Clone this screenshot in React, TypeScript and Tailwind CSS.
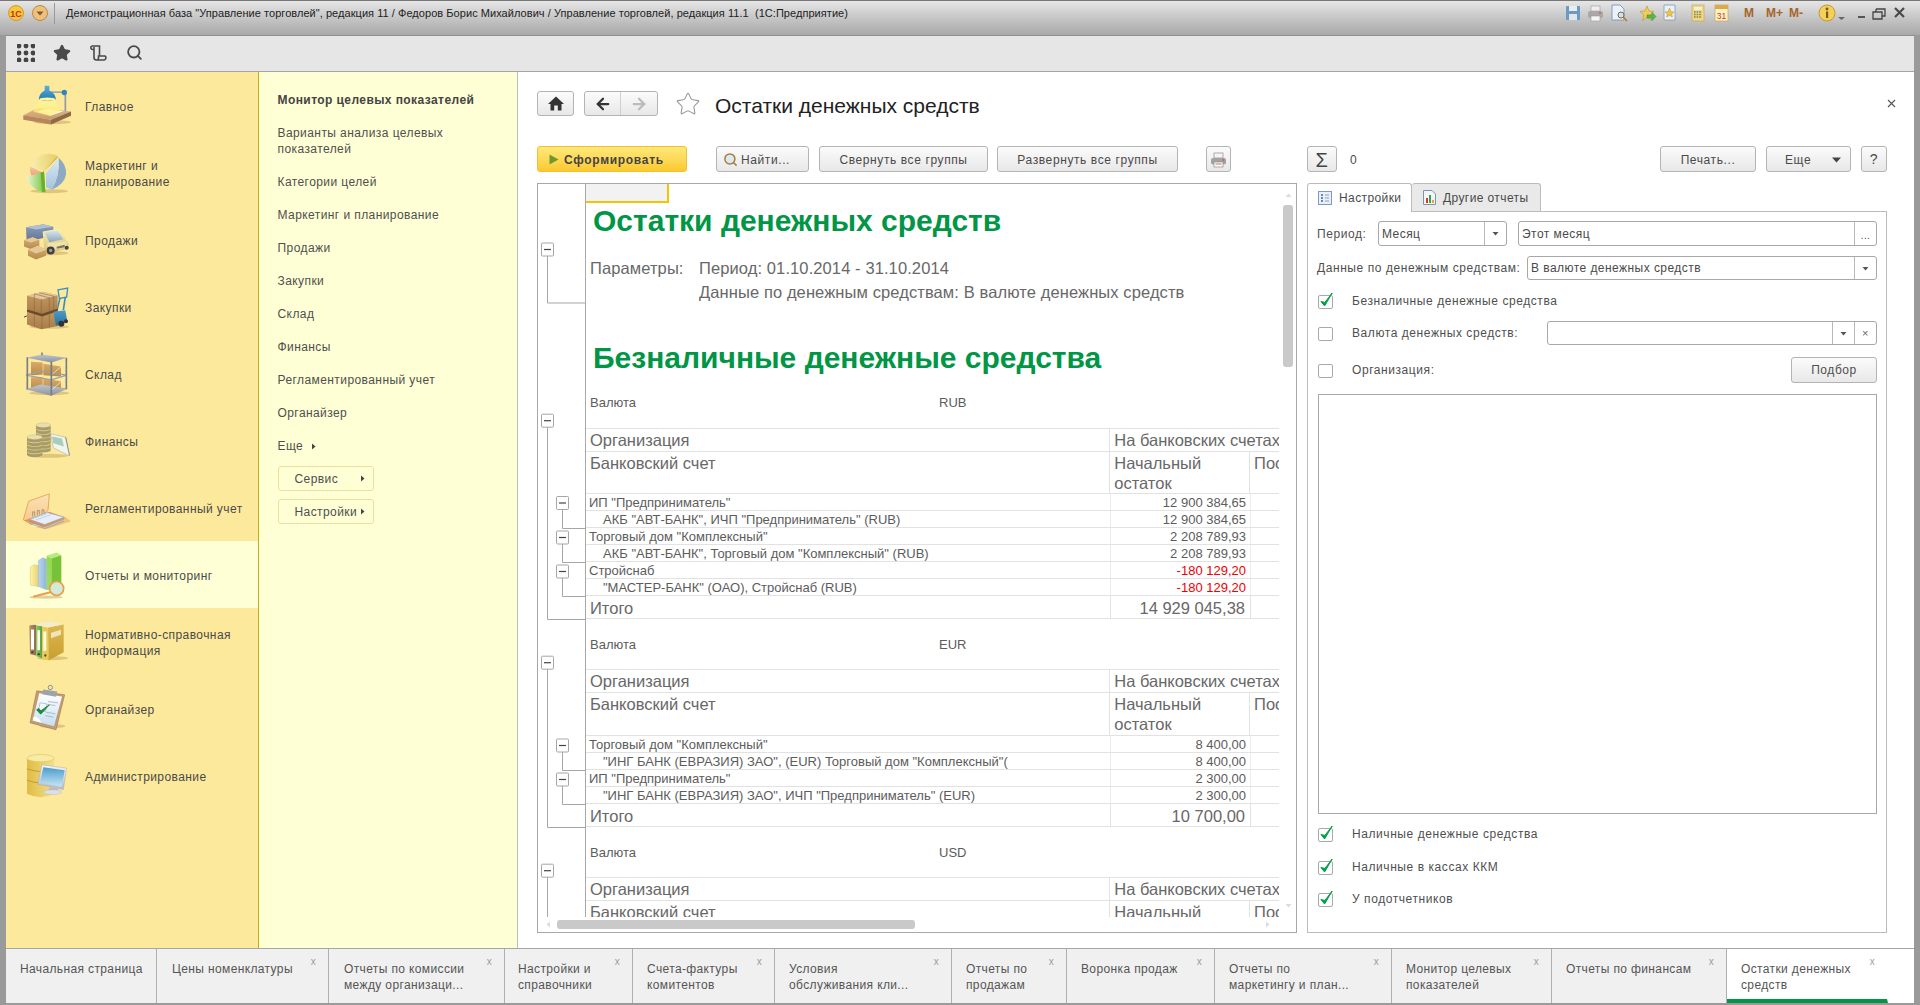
import React from "react";
import { Star, Search, ArrowLeft, ArrowRight } from "lucide-react";

const Btn = ({ w, children, cls = "" }: { w: string; children?: React.ReactNode; cls?: string }) => (
  <div className={`${w} h-[26px] shrink-0 flex items-center justify-center pt-[1px] rounded-[3px] border border-[#b4b4b4] bg-linear-to-b from-[#fbfbfb] to-[#e8e8e8] text-[12px] tracking-[0.6px] text-[#4a4a4a] ${cls}`}>
    {children}
  </div>
);

const Check = ({ on }: { on?: boolean }) => (
  <svg width="18" height="18" viewBox="0 0 18 18" className="shrink-0 overflow-visible">
    <rect x="0.5" y="3.5" width="14" height="13" rx="1.5" fill="#fff" stroke="#a9a9a9" />
    {on && <path d="M3 9.5 L6.6 14 L14.2 1 L6.9 10.4 Z" fill="#00a048" stroke="#00a048" strokeWidth="1" strokeLinejoin="round" />}
  </svg>
);

const Tri = ({ dir = "down", c = "#555" }: { dir?: "down" | "right" | "up" | "left"; c?: string }) => (
  <svg width="7" height="7" viewBox="0 0 7 7" className="shrink-0">
    {dir === "down" && <path d="M0.5 2 H6.5 L3.5 5.5 Z" fill={c} />}
    {dir === "up" && <path d="M0.5 5 H6.5 L3.5 1.5 Z" fill={c} />}
    {dir === "right" && <path d="M2 0.5 V6.5 L5.5 3.5 Z" fill={c} />}
    {dir === "left" && <path d="M5 0.5 V6.5 L1.5 3.5 Z" fill={c} />}
  </svg>
);

/* ---------- section icons: drawn in a 192-unit wide space ---------- */
const V = ({ c, children }: { c: number; children: React.ReactNode }) => (
  <svg width="64" height="62" viewBox={`0 ${c - 93} 192 186`}>{children}</svg>
);
const Shadow = ({ cx, cy, rx, ry = 6 }: { cx: number; cy: number; rx: number; ry?: number }) => (
  <ellipse cx={cx} cy={cy} rx={rx} ry={ry} fill="#b79a58" opacity=".45" />
);
const G = ({ id, a, b, h }: { id: string; a: string; b: string; h?: boolean }) => (
  <linearGradient id={id} x1="0" y1="0" x2={h ? "1" : "0"} y2={h ? "0" : "1"}>
    <stop offset="0" stopColor={a} /><stop offset="1" stopColor={b} />
  </linearGradient>
);

const IconHome = () => (
  <V c={82.5}>
    <defs>
      <G id="a1" a="#fff7a0" b="#ffec6a" />
      <G id="a2" a="#5eaedb" b="#1f78ad" />
      <G id="a3" a="#e2b88e" b="#c89868" />
    </defs>
    <Shadow cx={110} cy={131} rx={55} />
    <path d="M22 110 L66 88 L165 99 L105 124 Z" fill="url(#a3)" />
    <path d="M22 110 L105 124 L105 138 L22 124 Z" fill="#b5865c" />
    <path d="M105 124 L165 99 L165 112 L105 138 Z" fill="#8f6a48" />
    <path d="M62 100 L92 90 L142 98 L104 112 Z" fill="#fffdf0" />
    <path d="M70 62 H116 L132 98 L100 112 L52 100 Z" fill="url(#a1)" opacity=".75" />
    <path d="M148 46 V98" stroke="#8e9aa4" strokeWidth="5" />
    <path d="M102 41 H146" stroke="#9aa6b0" strokeWidth="5" />
    <circle cx="145" cy="42" r="8" fill="#2f86b8" />
    <path d="M86 22 H100 V36 Q118 44 120 62 Q94 72 68 62 Q70 44 86 36 Z" fill="url(#a2)" />
    <ellipse cx="94" cy="62" rx="24" ry="5" fill="#fff59a" />
  </V>
);
const IconPie = () => (
  <V c={283.5}>
    <defs>
      <G id="b1" a="#f8eeb0" b="#e6cc62" h />
      <G id="b2" a="#dbe9f5" b="#a4c3df" />
      <G id="b3" a="#eef8d8" b="#74c23c" h />
      <G id="b4" a="#f7c4a0" b="#f0a280" />
    </defs>
    <Shadow cx={100} cy={338} rx={56} />
    <path d="M85 278 L45 262 A 58 58 0 0 1 128 234 Z" fill="url(#b1)" />
    <path d="M128 234 L85 278 L118 240 Z" fill="#cbae48" />
    <path d="M85 284 L43 265 Q 39 278 46 291 Z" fill="url(#b4)" />
    <path d="M128 238 Q152 258 150 288 Q146 318 106 334 Q132 296 128 238 Z" fill="#8ca9c6" />
    <path d="M90 284 L126 240 Q134 292 106 333 L90 326 Z" fill="url(#b2)" />
    <path d="M30 296 L84 279 L88 341 Q50 338 30 296 Z" fill="url(#b3)" />
    <path d="M74 283 L84 279 L88 341 L78 340 Z" fill="#66b034" />
  </V>
);
const IconTruck = () => (
  <V c={484.5}>
    <defs>
      <G id="c1" a="#8da0bc" b="#5f7290" />
      <G id="c2" a="#f8efb4" b="#d6c078" />
      <G id="c3" a="#d6e6f0" b="#8ea6b8" />
      <G id="c4" a="#d9b070" b="#b58a4e" />
    </defs>
    <Shadow cx={105} cy={524} rx={52} />
    <path d="M30 446 L82 437 L112 445 L112 472 L32 490 Z" fill="url(#c1)" />
    <path d="M30 446 L82 437 L112 445 L60 453 Z" fill="#b0bfd2" />
    <path d="M80 459 L128 451 L158 494 L158 510 L96 524 L84 510 Z" fill="url(#c2)" />
    <path d="M86 462 L124 456 L142 482 L100 491 Z" fill="url(#c3)" />
    <path d="M92 494 L150 490 L156 506 L100 516 Z" fill="#efe3a8" />
    <path d="M122 505 L146 499 L146 506 L122 511 Z" fill="#7a7460" />
    <circle cx="104" cy="516" r="12" fill="#3f3f3f" /><circle cx="104" cy="516" r="5" fill="#9c9c9c" />
    <circle cx="152" cy="508" r="6" fill="#444" />
    <path d="M24 485 L50 476 L70 484 L70 502 L45 512 L24 504 Z" fill="url(#c4)" />
    <path d="M24 485 L50 476 L70 484 L45 492 Z" fill="#e6c898" />
    <path d="M36 514 L66 502 L92 514 L90 532 L60 543 L36 532 Z" fill="url(#c4)" />
    <path d="M36 514 L66 502 L92 514 L60 525 Z" fill="#e6c898" />
  </V>
);
const IconBoxes = () => (
  <V c={685.5}>
    <defs>
      <G id="d1" a="#c69a64" b="#a87c48" />
      <G id="d2" a="#4f9dca" b="#256f9f" />
    </defs>
    <Shadow cx={100} cy={745} rx={60} />
    <path d="M126 634 L155 629 L152 656 L130 660 Z" fill="none" stroke="#3d8ebd" strokeWidth="4" />
    <path d="M132 658 L122 700 M148 655 L142 695" stroke="#3d8ebd" strokeWidth="5" />
    <path d="M33 696 L122 690 L128 742 L76 752 L33 738 Z" fill="url(#d1)" />
    <path d="M33 652 L80 640 L125 650 L125 690 L78 706 L33 692 Z" fill="url(#d1)" />
    <path d="M33 652 L80 640 L125 650 L78 663 Z" fill="#e2c79a" />
    <path d="M55 646 L100 658 L100 698 M70 643 L113 653 L113 694 M55 646 V699 M76 704 V662" stroke="#86623a" strokeWidth="1.6" fill="none" />
    <path d="M55 702 V744 M78 708 V752 M100 704 V748" stroke="#86623a" strokeWidth="1.6" />
    <path d="M33 692 L78 706 L125 690 L125 698 L78 714 L33 700 Z" fill="#6b4a28" />
    <path d="M112 700 L148 695 L154 730 L120 742 Z" fill="url(#d2)" />
    <path d="M24 716 L33 712" stroke="#444" strokeWidth="3" />
    <circle cx="136" cy="736" r="9" fill="#333" /><circle cx="150" cy="728" r="6" fill="#333" />
  </V>
);
const IconShelf = () => (
  <V c={100.5}>
    <defs><G id="e1" a="#d9aa66" b="#b98a48" /><G id="e2" a="#c0c5cc" b="#8b929b" /></defs>
    <Shadow cx={100} cy={158} rx={60} />
    <path d="M45 64 L80 66 V102 L45 104 Z" fill="url(#e1)" /><path d="M82 70 L135 78 V108 L82 104 Z" fill="url(#e1)" />
    <path d="M45 110 L80 110 V146 L45 148 Z" fill="url(#e1)" /><path d="M82 114 L135 122 V152 L82 148 Z" fill="url(#e1)" />
    <path d="M32 52 L78 42 L152 52 L106 66 Z" fill="url(#e2)" />
    <path d="M30 104 L76 92 L152 104 L106 118 Z" fill="none" stroke="#9aa1aa" strokeWidth="4" />
    <path d="M28 146 L74 132 L156 144 L106 166 Z" fill="url(#e2)" />
    <path d="M34 50 V146 M106 64 V164 M151 52 V146" stroke="#767e88" strokeWidth="5" />
    <path d="M78 44 V36" stroke="#7d858f" strokeWidth="5" />
    <path d="M110 100 L148 68 M110 146 L148 112" stroke="#f4f4f4" strokeWidth="2" />
  </V>
);
const Coin = ({ x, ys, rx }: { x: number; ys: number[]; rx: number }) => (
  <>
    {ys.map((y) => (
      <g key={y}>
        <path d={`M${x - rx} ${y} V${y + 9} A ${rx} 7 0 0 0 ${x + rx} ${y + 9} V${y} Z`} fill="#a89c64" />
        <ellipse cx={x} cy={y} rx={rx} ry="7" fill="#e9dfb0" stroke="#b5a970" strokeWidth="1" />
      </g>
    ))}
  </>
);
const IconCoins = () => (
  <V c={301.5}>
    <Shadow cx={100} cy={346} rx={56} />
    <path d="M104 280 L148 290 L160 346 L112 322 Z" fill="#f0f5f0" stroke="#9aa8a0" strokeWidth="1.5" />
    <path d="M108 288 L138 294 L144 318 L112 308 Z" fill="#a9cdbb" />
    <path d="M148 290 L150 288 L162 344 L160 346 Z" fill="#7c8a84" />
    <Coin x={82} rx={22} ys={[320, 309, 298, 287, 276, 265, 254]} />
    <Coin x={56} rx={23} ys={[334, 323, 312, 301, 290]} />
  </V>
);
const IconFolderChart = () => (
  <V c={502.5}>
    <defs><G id="g1" a="#fbe2b4" b="#f6c88a" /></defs>
    <path d="M60 560 L150 532 L165 542 L90 566 Z" fill="#e8b878" opacity=".8" />
    <path d="M22 538 L38 482 L100 460 L96 510 L46 552 Z" fill="url(#g1)" stroke="#dc8c3c" strokeWidth="2" />
    <path d="M50 528 V514 H56 V526 M64 524 V510 H70 V522 M78 520 V508 H84 V518" fill="none" stroke="#8a7a64" strokeWidth="2" />
    <path d="M24 540 L100 514 L150 532 L84 560 Z" fill="#e8924a" />
    <path d="M40 536 L94 516 L144 530 L86 552 Z" fill="#e6eff9" stroke="#7b9dc9" strokeWidth="1.4" />
    <path d="M40 542 L86 558 L144 536 M40 548 L86 564 L144 542" fill="none" stroke="#7b9dc9" strokeWidth="2" />
    <path d="M46 536 L92 520 M60 538 L106 522" stroke="#9cb8da" strokeWidth="1.5" />
  </V>
);
const IconBars = () => (
  <V c={703.5}>
    <defs>
      <G id="h1" a="#8fdc48" b="#a8d66c" />
      <G id="h2" a="#b8d6ee" b="#8db6d8" h />
      <G id="h3" a="#fff2a0" b="#e6d27a" h />
    </defs>
    <Shadow cx={90} cy={770} rx={50} ry={5} />
    <path d="M43 680 L55 672 L68 676 V738 L43 734 Z" fill="url(#h3)" stroke="#c9b25c" strokeWidth="1" />
    <path d="M67 660 L80 652 L92 656 V748 L67 738 Z" fill="url(#h2)" stroke="#7fa5c8" strokeWidth="1" />
    <path d="M92 646 L122 636 L136 644 L106 654 Z" fill="#b7ea82" />
    <path d="M92 646 L106 654 V750 L92 748 Z" fill="url(#h1)" />
    <path d="M106 654 L136 644 V728 L106 750 Z" fill="#78c238" />
    <path d="M103 755 L54 768" stroke="#e5a049" strokeWidth="6" strokeLinecap="round" />
    <circle cx="122" cy="744" r="21" fill="#d4ead8" stroke="#e5a049" strokeWidth="5" />
  </V>
);
const IconBinders = () => (
  <V c={109.5}>
    <defs>
      <G id="i1" a="#dcb850" b="#c89e30" />
      <G id="i2" a="#b88f68" b="#8f6c48" h />
      <G id="i3" a="#8ccb68" b="#5ca03e" h />
    </defs>
    <Shadow cx={110} cy={158} rx={46} />
    <path d="M40 60 L60 56 L61 150 L42 146 Z" fill="url(#i2)" />
    <path d="M60 60 L78 62 V158 L61 152 Z" fill="url(#i3)" />
    <path d="M78 64 L96 66 L98 165 L78 158 Z" fill="#e8ca58" />
    <path d="M96 66 L143 56 V140 L98 165 Z" fill="url(#i1)" />
    <path d="M42 58 L100 48 L143 56 L96 66 L60 58 Z" fill="#f4eccb" />
    <rect x="45" y="72" width="9" height="60" fill="#fff" />
    <rect x="64" y="74" width="8" height="60" fill="#f8fbe8" />
    <rect x="82" y="78" width="9" height="58" fill="#fffbe0" />
    <path d="M105 82 L135 73 V88 L105 98 Z" fill="#efe4ba" />
    <circle cx="49" cy="140" r="3.5" fill="#444" /><circle cx="68" cy="146" r="3.5" fill="#2f4f2f" /><circle cx="88" cy="150" r="3.5" fill="#5a4a20" />
  </V>
);
const IconClip = () => (
  <V c={310.5}>
    <defs><G id="j1" a="#ffffff" b="#c6def2" /></defs>
    <Shadow cx={110} cy={362} rx={38} />
    <path d="M62 256 L146 268 L120 373 L42 352 Z" fill="#c29c72" stroke="#8f6e4c" strokeWidth="1.5" />
    <path d="M70 263 L138 273 L114 362 L50 345 Z" fill="url(#j1)" />
    <path d="M52 335 Q66 330 76 352 L50 345 Z" fill="#fff" />
    <path d="M82 252 L124 258 L120 274 L78 266 Z" fill="#9ca3aa" />
    <circle cx="103" cy="246" r="6.5" fill="none" stroke="#888f96" strokeWidth="3" />
    <path d="M72 292 L92 295 L88 318 L68 315 Z" fill="#f4f8fc" stroke="#7f9ab4" strokeWidth="1.5" />
    <path d="M96 288 L126 292 M94 297 L118 300 M90 320 L118 325 M88 330 L112 335" stroke="#8fa2b4" strokeWidth="2" />
    <path d="M62 313 L74 326 L100 298 L75 316 L68 309 Z" fill="#1e8a3c" stroke="#1e8a3c" strokeWidth="3" strokeLinejoin="round" />
  </V>
);
const IconAdmin = () => (
  <V c={511.5}>
    <defs>
      <G id="k1" a="#e0bc44" b="#f3e08a" h />
      <G id="k2" a="#4a9ccc" b="#c8e6f5" />
      <G id="k3" a="#f4f6f8" b="#b4bcc4" />
    </defs>
    <path d="M33 458 V565 Q74 586 115 565 V458 Z" fill="url(#k1)" />
    <path d="M33 490 Q74 506 115 490 M33 524 Q74 540 115 524" stroke="#b8942c" strokeWidth="2.5" fill="none" />
    <ellipse cx="74" cy="458" rx="41" ry="11" fill="#f8eba6" stroke="#d8bb54" strokeWidth="1.5" />
    <path d="M78 478 L152 488 L142 552 L65 536 Z" fill="url(#k3)" stroke="#98a0a8" strokeWidth="1.2" />
    <path d="M82 485 L146 494 L137 544 L72 531 Z" fill="url(#k2)" />
    <path d="M100 546 H124 L128 558 H96 Z" fill="#b8bec4" />
    <ellipse cx="110" cy="560" rx="28" ry="7" fill="#dde0e4" stroke="#a4a9ae" />
  </V>
);

const sections: { t: string[]; I: React.FC; sel?: boolean }[] = [
  { t: ["Главное"], I: IconHome },
  { t: ["Маркетинг и", "планирование"], I: IconPie },
  { t: ["Продажи"], I: IconTruck },
  { t: ["Закупки"], I: IconBoxes },
  { t: ["Склад"], I: IconShelf },
  { t: ["Финансы"], I: IconCoins },
  { t: ["Регламентированный учет"], I: IconFolderChart },
  { t: ["Отчеты и мониторинг"], I: IconBars, sel: true },
  { t: ["Нормативно-справочная", "информация"], I: IconBinders },
  { t: ["Органайзер"], I: IconClip },
  { t: ["Администрирование"], I: IconAdmin },
];

const subItems = ["Категории целей", "Маркетинг и планирование", "Продажи", "Закупки", "Склад", "Финансы", "Регламентированный учет", "Органайзер"];

const tabs = [
  { w: "w-[151px]", pl: "pl-[14px]", l: ["Начальная страница"] },
  { w: "w-[172px]", pl: "pl-[15px]", l: ["Цены номенклатуры"], x: 1 },
  { w: "w-[176px]", pl: "pl-[15px]", l: ["Отчеты по комиссии", "между организаци..."], x: 1 },
  { w: "w-[128px]", pl: "pl-[13px]", l: ["Настройки и", "справочники"], x: 1 },
  { w: "w-[142px]", pl: "pl-[14px]", l: ["Счета-фактуры", "комитентов"], x: 1 },
  { w: "w-[177px]", pl: "pl-[14px]", l: ["Условия", "обслуживания кли..."], x: 1 },
  { w: "w-[115px]", pl: "pl-[14px]", l: ["Отчеты по", "продажам"], x: 1 },
  { w: "w-[148px]", pl: "pl-[14px]", l: ["Воронка продаж"], x: 1 },
  { w: "w-[177px]", pl: "pl-[14px]", l: ["Отчеты по", "маркетингу и план..."], x: 1 },
  { w: "w-[160px]", pl: "pl-[14px]", l: ["Монитор целевых", "показателей"], x: 1 },
  { w: "w-[175px]", pl: "pl-[14px]", l: ["Отчеты по финансам"], x: 1 },
  { w: "w-[161px]", pl: "pl-[14px]", l: ["Остатки денежных", "средств"], x: 1, sel: true },
];

const Rule = "border-b border-[#e2e2e2]";

const Table = ({ cur, rows, total }: { cur: string; rows: { t: string; v: string; ind?: boolean; red?: boolean }[]; total?: string }) => (
  <div className="shrink-0">
    <div className={`h-[51px] pt-[1px] flex items-center text-[13px] text-[#5c5c5c] ${Rule}`}>
      <span className="w-[353px] pl-[4px]">Валюта</span>
      <span>{cur}</span>
    </div>
    <div className={`h-[23px] flex text-[16.5px] text-[#686868] ${Rule}`}>
      <div className="w-[525px] pl-[4px] border-r border-[#e2e2e2] leading-[23px]">Организация</div>
      <div className="w-[169px] pl-[4px] overflow-hidden whitespace-nowrap leading-[23px]">На банковских счетах</div>
    </div>
    <div className={`h-[42.67px] flex text-[16.5px] leading-[20px] text-[#686868] ${Rule}`}>
      <div className="w-[525px] pl-[4px] pt-[1px] border-r border-[#e2e2e2]">Банковский счет</div>
      <div className="w-[140px] pl-[4px] pt-[1px] border-r border-[#e2e2e2]">Начальный<br />остаток</div>
      <div className="w-[29px] pl-[4px] pt-[1px] overflow-hidden whitespace-nowrap">Пос</div>
    </div>
    {rows.map((r) => (
      <div key={r.t + r.v} className={`h-[17px] flex text-[13px] leading-[18px] text-[#5c5c5c] ${Rule}`}>
        <div className={`w-[525px] overflow-hidden whitespace-nowrap border-r border-[#ececec] ${r.ind ? "pl-[17px]" : "pl-[3px]"}`}>{r.t}</div>
        <div className={`w-[140px] text-right pr-[4px] border-r border-[#ececec] ${r.red ? "text-[#f00000]" : ""}`}>{r.v}</div>
      </div>
    ))}
    <div className={`h-[23px] flex text-[16.5px] text-[#686868] leading-[24px] ${Rule}`}>
      <div className="w-[525px] pl-[4px] border-r border-[#e2e2e2]">Итого</div>
      <div className="w-[140px] text-right pr-[5px] border-r border-[#e2e2e2]">{total}</div>
    </div>
  </div>
);

const marks = [
  { y: 249.5, end: 303, x: 9.5 },
  { y: 420.7, end: 619.5, x: 9.5 },
  { y: 662.7, end: 827.5, x: 9.5 },
  { y: 870.7, end: 940, x: 9.5 },
  { y: 503, end: 528.5, x: 24.5 },
  { y: 537.5, end: 562.5, x: 24.5 },
  { y: 571.5, end: 596.5, x: 24.5 },
  { y: 745.5, end: 770.5, x: 24.5 },
  { y: 779.5, end: 804.5, x: 24.5 },
];

const Outline = () => (
  <svg width="47" height="733" viewBox="0 184 47 733" className="shrink-0">
    {marks.map((m) => (
      <g key={m.y}>
        <path d={`M${m.x} ${m.y} V${m.end} H47`} fill="none" stroke="#a6a6a6" />
        <rect x={m.x - 6} y={m.y - 6.5} width="12" height="13" rx="1" fill="#fff" stroke="#a6a6a6" />
        <path d={`M${m.x - 3.5} ${m.y} H${m.x + 3.5}`} stroke="#444" strokeWidth="1.2" />
      </g>
    ))}
  </svg>
);

const Printer = () => (
  <svg width="15" height="16" viewBox="0 0 15 16">
    <rect x="3" y="1" width="9" height="5" fill="#f4f4f4" stroke="#8f8f8f" strokeWidth=".7" />
    <rect y="6" width="15" height="6.5" rx="2" fill="#a3a3a3" />
    <rect x="3" y="10" width="9" height="5" fill="#fbfbfb" stroke="#8f8f8f" strokeWidth=".7" />
    <path d="M4.5 12 H10.5" stroke="#d8704a" strokeWidth="1" />
    <circle cx="12.5" cy="8" r="1" fill="#d85c3c" />
  </svg>
);

const TopIcons = () => (
  <div className="ml-auto flex items-start h-[30px] -mt-[2px] pr-[14px]">
    <svg width="344" height="30" viewBox="0 0 344 30">
      <g transform="translate(4 7)"><rect width="14" height="14" fill="#6f9ac0" rx="1" /><rect x="3" width="8" height="5" fill="#e8eef5" /><rect x="3" y="8" width="8" height="6" fill="#dfe6ee" /></g>
      <g transform="translate(26 7)"><rect x="3" width="9" height="5" fill="#eee" stroke="#999" strokeWidth=".6" /><rect y="5" width="15" height="7" rx="2" fill="#a8a8a8" /><rect x="3" y="10" width="9" height="5" fill="#f5f5f5" stroke="#999" strokeWidth=".6" /><circle cx="12" cy="7" r="1" fill="#d85c3c" /></g>
      <g transform="translate(50 6)"><path d="M0 0 H8 L12 4 V15 H0 Z" fill="#eaf1f8" stroke="#6f8eac" strokeWidth=".8" /><circle cx="9" cy="10" r="3" fill="#cfe3ef" stroke="#7a6a4a" /><path d="M11 12 L15 16" stroke="#b5762e" strokeWidth="1.6" /></g>
      <g transform="translate(78 7)"><path d="M7 0 L9 5 L14 5.5 L10.2 9 L11.4 14.5 L7 11.6 L2.6 14.5 L3.8 9 L0 5.5 L5 5 Z" fill="#f2cc55" stroke="#b8962e" strokeWidth=".6" /><path d="M7 9 H12 V6.5 L16 10.5 L12 14.5 V12 H7 Z" fill="#54b84a" stroke="#2f8a32" strokeWidth=".5" /></g>
      <g transform="translate(102 6)"><path d="M0 0 H11 V15 H0 Z" fill="#eaf1f8" stroke="#7f9ab4" strokeWidth=".8" /><path d="M5.5 3 L7 6.5 L10 7 L7.8 9 L8.4 12 L5.5 10.5 L2.6 12 L3.2 9 L1 7 L4 6.5 Z" fill="#eec24a" stroke="#a8862a" strokeWidth=".4" /></g>
      <g transform="translate(130 6)"><rect width="12" height="16" fill="#f3d58a" stroke="#c8a650" strokeWidth=".7" /><rect x="2" y="2" width="8" height="3" fill="#e8f4d8" /><path d="M2 7 H10 M2 9.5 H10 M2 12 H10" stroke="#6f8a4a" strokeDasharray="1.6 1" strokeWidth="1.4" /></g>
      <g transform="translate(153 5)"><rect y="1" width="13" height="16" fill="#fdf2c4" stroke="#c8a650" strokeWidth=".7" /><rect y="1" width="13" height="4" fill="#d9a94a" /><text x="6.5" y="14.5" textAnchor="middle" fontSize="8.5" fill="#d2331f" fontFamily="'Liberation Sans', sans-serif">31</text></g>
      <g fontFamily="'Liberation Sans', sans-serif" fontWeight="700" fontSize="12" fill="#a5642a">
        <text x="182" y="18">M</text><text x="204" y="18">M+</text><text x="227" y="18">M-</text>
      </g>
      <g transform="translate(257 6)"><circle cx="8" cy="8" r="8" fill="#f4cf5a" stroke="#c89a2e" /><circle cx="8" cy="4" r="1.4" fill="#7a5a18" /><rect x="7" y="6.5" width="2.2" height="6.5" fill="#7a5a18" /></g>
      <path d="M276 18 H283 L279.5 21 Z" fill="#666" />
      <rect x="296" y="17" width="7" height="2" fill="#555" />
      <path d="M314 10 H323 V17 H320 M314 10 V13 M311 13 H320 V20 H311 Z" fill="none" stroke="#444" strokeWidth="1.3" />
      <path d="M333 9 L342 18 M342 9 L333 18" stroke="#4a4a4a" strokeWidth="2.2" />
    </svg>
  </div>
);

const Field = ({ w, text, btns }: { w: string; text?: string; btns: React.ReactNode[] }) => (
  <div className={`${w} h-full flex rounded-[3px] border border-[#a8a8a8] bg-white text-[12px] tracking-[0.45px] text-[#4a4a4a]`}>
    <div className="flex-1 pl-[3px] flex items-center whitespace-nowrap">{text}</div>
    {btns.map((b, i) => (
      <div key={i} className="w-[22px] flex items-center justify-center border-l border-[#b8b8b8]">{b}</div>
    ))}
  </div>
);

export default function App() {
  return (
    <div className="w-[1920px] h-[1005px] flex flex-col overflow-hidden bg-[#9a9a9a] font-['Liberation_Sans','Noto_Sans',sans-serif]">
      {/* title bar */}
      <div className="h-[35px] shrink-0 flex items-start border-t border-[#777] bg-linear-to-b from-[#e6e6e6] via-[#c6c6c6] to-[#a8a8a8]">
        <svg width="60" height="30" viewBox="0 0 60 30" className="ml-[6px] shrink-0">
          <circle cx="10" cy="12" r="7.5" fill="#f6c83c" stroke="#d49a2a" />
          <text x="10" y="15.5" textAnchor="middle" fontSize="9" fontWeight="700" fill="#d22a1a" fontFamily="'Liberation Sans', sans-serif">1С</text>
          <circle cx="34" cy="12" r="7.5" fill="#f0c07a" stroke="#b98a4a" />
          <path d="M30.5 10.5 H37.5 L34 14.5 Z" fill="#7a5a30" />
          <path d="M48.5 2 V23" stroke="#999" />
        </svg>
        <div className="whitespace-nowrap text-[11px] leading-[24px] tracking-[0.05px] text-[#222]">
          Демонстрационная база "Управление торговлей", редакция 11 / Федоров Борис Михайлович / Управление торговлей, редакция 11.1&nbsp;&nbsp;(1С:Предприятие)
        </div>
        <TopIcons />
      </div>

      <div className="flex-1 min-h-0 flex flex-col mx-[6px]">
        {/* toolbar */}
        <div className="h-[37px] shrink-0 flex items-center pb-[2px] bg-[#e6e6e6] border-b border-t border-[#a4a4a4] border-t-[#8f8f8f]">
          <svg width="18" height="18" viewBox="0 0 18 18" className="ml-[11px] shrink-0" fill="#444">
            {[2, 9, 16].map((y) => [2, 9, 16].map((x) => <circle key={`${x}-${y}`} cx={x} cy={y} r="2.4" />))}
          </svg>
          <Star className="ml-[18px]" size={18} fill="#4a4a4a" stroke="#4a4a4a" />
          <svg width="18" height="18" viewBox="0 0 18 18" className="ml-[19px] shrink-0" fill="none" stroke="#4a4a4a" strokeWidth="1.6">
            <path d="M6 2 H2.6 A1.6 1.6 0 0 0 2.6 5.5 H4 V13.5 A2.5 2.5 0 0 0 6.5 16 H13.5 A2.2 2.2 0 0 0 15 12 H8.5 V14 A2 2 0 0 1 6.5 16 M4 5 V3 M4 2 H9.5 V12" />
          </svg>
          <Search className="ml-[18px]" size={17} stroke="#4a4a4a" strokeWidth={2.6} />
        </div>

        {/* main */}
        <div className="h-[876px] shrink-0 flex">
          {/* sections */}
          <div className="w-[253px] shrink-0 bg-[#fde99c] border-r border-[#c9ac10]">
            {sections.map((s) => (
              <div key={s.t[0]} className={`h-[67px] flex items-center pl-[10px] ${s.sel ? "bg-[#ffffd5]" : ""}`}>
                <div className="w-[64px] shrink-0 flex items-center justify-center"><s.I /></div>
                <div className="ml-[5px] pt-[2px] text-[12px] leading-[16px] tracking-[0.42px] text-[#4a4a4a] whitespace-pre">
                  {s.t.map((l) => <div key={l}>{l}</div>)}
                </div>
              </div>
            ))}
          </div>
          {/* sub panel */}
          <div className="w-[259px] shrink-0 bg-[#ffffd5] border-r border-[#bdbdbd] pl-[18.5px] pt-[20px] text-[12px] leading-[16px] tracking-[0.42px] text-[#4f4f4f]">
            <div className="font-bold text-[#444] h-[16px]">Монитор целевых показателей</div>
            <div className="mt-[17px]">Варианты анализа целевых<br />показателей</div>
            {subItems.map((t) => <div key={t} className="mt-[17px] whitespace-pre">{t}</div>)}
            <div className="mt-[17px] flex items-center gap-[7px]">Еще <Tri dir="right" c="#444" /></div>
            <div className="mt-[12px] w-[96px] h-[25px] flex items-center pl-[16px] pr-[7px] justify-between rounded-[3px] border border-[#ebdf9e]">Сервис <Tri dir="right" c="#444" /></div>
            <div className="mt-[8px] w-[96px] h-[25px] flex items-center pl-[16px] pr-[7px] justify-between rounded-[3px] border border-[#ebdf9e]">Настройки <Tri dir="right" c="#444" /></div>
          </div>

          {/* content */}
          <div className="flex-1 min-w-0 bg-white pl-[19px] pt-[19px]">
            <div className="h-[25px] flex items-center">
              <div className="w-[37px] h-[25px] flex items-center justify-center rounded-[3px] border border-[#b4b4b4] bg-linear-to-b from-[#fbfbfb] to-[#e8e8e8]">
                <svg width="16" height="15" viewBox="0 0 16 15" fill="#333"><path d="M8 0.5 L16 8 H13.5 V14.5 H9.8 V9.5 H6.2 V14.5 H2.5 V8 H0 Z" /></svg>
              </div>
              <div className="ml-[10px] w-[74px] h-[25px] flex rounded-[3px] border border-[#b4b4b4] bg-linear-to-b from-[#fbfbfb] to-[#e8e8e8]">
                <div className="w-[36px] flex items-center justify-center border-r border-[#cfcfcf]"><ArrowLeft size={18} strokeWidth={3} stroke="#333" /></div>
                <div className="flex-1 flex items-center justify-center"><ArrowRight size={18} strokeWidth={3} stroke="#bbb" /></div>
              </div>
              <Star className="ml-[17px]" size={26} strokeWidth={1} fill="#fff" stroke="#9a9a9a" />
              <div className="ml-[14px] pt-[3px] text-[21px] leading-[25px] text-[#222] whitespace-nowrap">Остатки денежных средств</div>
              <svg width="9" height="9" viewBox="0 0 9 9" className="ml-auto mr-[18px]" stroke="#555" strokeWidth="1.1"><path d="M1 1 L8 8 M8 1 L1 8" /></svg>
            </div>

            <div className="mt-[30px] grid grid-cols-[760px_580px] gap-x-[10px] gap-y-[11px]">
              {/* left buttons */}
              <div className="flex h-[26px]">
                <div className="w-[150px] h-[26px] flex items-center pt-[1px] pl-[11px] gap-[5px] rounded-[3px] border border-[#f0c030] bg-linear-to-b from-[#ffe978] to-[#fcc92c] text-[12px] font-bold tracking-[0.7px] text-[#444]">
                  <svg width="10" height="11" viewBox="0 0 10 11"><path d="M0.5 0.5 L9.5 5.5 L0.5 10.5 Z" fill="#6f9a28" /></svg>
                  Сформировать
                </div>
                <Btn w="w-[93px] ml-[29px]" cls="justify-start pl-[6px]">
                  <Search size={15} stroke="#a87c3c" strokeWidth={2.4} fill="#dbe9f4" className="mr-[3px]" />Найти...
                </Btn>
                <Btn w="w-[169px] ml-[10px]">Свернуть все группы</Btn>
                <Btn w="w-[181px] ml-[9px]">Развернуть все группы</Btn>
                <Btn w="w-[25px] ml-[28px]"><Printer /></Btn>
              </div>
              {/* right buttons */}
              <div className="flex h-[26px] items-center">
                <Btn w="w-[30px]"><span className="text-[20px] leading-none text-[#444]">Σ</span></Btn>
                <span className="ml-[13px] pt-[1px] text-[12px] text-[#4a4a4a]">0</span>
                <Btn w="w-[96px] ml-auto">Печать...</Btn>
                <Btn w="w-[85px] ml-[10px]" cls="justify-start pl-[18px]">
                  <span>Еще</span>
                  <svg width="9" height="6" viewBox="0 0 9 6" className="ml-[21px]"><path d="M0 0.5 H9 L4.5 5.5 Z" fill="#444" /></svg>
                </Btn>
                <Btn w="w-[26px] ml-[10px]"><span className="text-[14px]">?</span></Btn>
              </div>

              {/* report */}
              <div className="h-[750px] flex flex-col border border-[#a8a8a8] bg-white">
                <div className="h-[733px] shrink-0 flex">
                  <Outline />
                  <div className="w-[694px] shrink-0 border-l border-[#a8a8a8] overflow-hidden flex flex-col">
                    <div className="w-[83px] h-[19px] shrink-0 bg-[#f2f2f2] border-r-2 border-b-2 border-[#f5c400]" />
                    <div className="h-[36px] shrink-0 pl-[7px] text-[30px] leading-[36px] font-bold text-[#009646] whitespace-nowrap">Остатки денежных средств</div>
                    <div className="mt-[18px] pl-[4px] h-[48px] shrink-0 flex text-[16.5px] leading-[23.5px] tracking-[0.1px] text-[#686868]">
                      <div className="w-[109px]">Параметры:</div>
                      <div>Период: 01.10.2014 - 31.10.2014<br />Данные по денежным средствам: В валюте денежных средств</div>
                    </div>
                    <div className="mt-[35px] h-[37.67px] shrink-0 pl-[7px] text-[30px] leading-[36px] font-bold text-[#009646] whitespace-nowrap">Безналичные денежные средства</div>
                    <Table
                      cur="RUB"
                      total="14 929 045,38"
                      rows={[
                        { t: 'ИП "Предприниматель"', v: "12 900 384,65" },
                        { t: 'АКБ "АВТ-БАНК", ИЧП "Предприниматель" (RUB)', v: "12 900 384,65", ind: true },
                        { t: 'Торговый дом "Комплексный"', v: "2 208 789,93" },
                        { t: 'АКБ "АВТ-БАНК", Торговый дом "Комплексный" (RUB)', v: "2 208 789,93", ind: true },
                        { t: "Стройснаб", v: "-180 129,20", red: true },
                        { t: '"МАСТЕР-БАНК" (ОАО), Стройснаб (RUB)', v: "-180 129,20", ind: true, red: true },
                      ]}
                    />
                    <Table
                      cur="EUR"
                      total="10 700,00"
                      rows={[
                        { t: 'Торговый дом "Комплексный"', v: "8 400,00" },
                        { t: '"ИНГ БАНК (ЕВРАЗИЯ) ЗАО", (EUR) Торговый дом "Комплексный"(', v: "8 400,00", ind: true },
                        { t: 'ИП "Предприниматель"', v: "2 300,00" },
                        { t: '"ИНГ БАНК (ЕВРАЗИЯ) ЗАО", ИЧП "Предприниматель" (EUR)', v: "2 300,00", ind: true },
                      ]}
                    />
                    <Table cur="USD" total="" rows={[]} />
                  </div>
                  {/* vertical scrollbar */}
                  <div className="flex-1 flex flex-col items-center pt-[8px] pl-[1px]">
                    <Tri dir="up" c="#dcdcdc" />
                    <div className="mt-[6px] w-[10px] h-[162px] rounded-[3px] bg-[#c9c9c9]" />
                    <div className="mt-auto mb-[8px]"><Tri c="#dcdcdc" /></div>
                  </div>
                </div>
                {/* horizontal scrollbar */}
                <div className="flex-1 flex items-center pl-[7px]">
                  <Tri dir="left" c="#dcdcdc" />
                  <div className="ml-[5px] w-[358px] h-[9px] rounded-[3px] bg-[#c9c9c9]" />
                  <div className="ml-[349px]"><Tri dir="right" c="#dcdcdc" /></div>
                </div>
              </div>

              {/* settings panel */}
              <div className="h-[750px] flex flex-col">
                <div className="h-[28px] shrink-0 flex text-[12px] tracking-[0.4px] text-[#4a4a4a]">
                  <div className="w-[105px] h-[29px] z-10 flex items-center pl-[10px] gap-[6px] rounded-t-[3px] border border-b-0 border-[#bcbcbc] bg-white">
                    <svg width="14" height="14" viewBox="0 0 14 14"><rect x=".5" y=".5" width="13" height="13" fill="#eaf0fa" stroke="#7f9ac8" /><path d="M3 4 H5 M3 7 H5 M3 10 H5" stroke="#3a66b0" strokeWidth="1.4" /><path d="M7 4 H11 M7 7 H11 M7 10 H11" stroke="#8aa0c4" /></svg>
                    <span className="ml-[1px]">Настройки</span>
                  </div>
                  <div className="w-[129px] flex items-center pl-[11px] gap-[6px] rounded-t-[3px] border border-b-0 border-l-0 border-[#bcbcbc] bg-[#e9e9e9]">
                    <svg width="13" height="15" viewBox="0 0 13 15"><path d="M.5 .5 H9 L12.5 4 V14.5 H.5 Z" fill="#f2f6fb" stroke="#7f93ac" /><rect x="3" y="8" width="2" height="5" fill="#d23a2a" /><rect x="6" y="5" width="2" height="8" fill="#3aa04a" /><rect x="9" y="10" width="2" height="3" fill="#e8a32c" /></svg>
                    <span className="ml-[1px]">Другие отчеты</span>
                  </div>
                </div>
                <div className="flex-1 min-h-0 border border-[#bcbcbc] pl-[10px] pr-[9px] text-[12px] tracking-[0.57px] text-[#4f4f4f]">
                  <div className="mt-[9px] h-[25px] flex items-center">
                    <span className="w-[60px] -ml-[1px] mr-[1px]">Период:</span>
                    <Field w="w-[129px]" text="Месяц" btns={[<Tri c="#555" />]} />
                    <div className="w-[11px]" />
                    <Field w="w-[359px]" text="Этот месяц" btns={[<span className="text-[10px] leading-none pt-[4px]">...</span>]} />
                  </div>
                  <div className="mt-[10px] h-[24px] flex items-center">
                    <span className="w-[209px] -ml-[1px] mr-[1px] whitespace-nowrap">Данные по денежным средствам:</span>
                    <Field w="w-[350px]" text="В валюте денежных средств" btns={[<Tri c="#555" />]} />
                  </div>
                  <div className="mt-[9px] h-[24px] flex items-center"><Check on /><span className="ml-[16px]">Безналичные денежные средства</span></div>
                  <div className="mt-[8px] h-[24px] flex items-center">
                    <Check /><span className="ml-[16px] w-[195px] whitespace-nowrap">Валюта денежных средств:</span>
                    <Field w="w-[330px]" btns={[<Tri c="#555" />, <span className="text-[11px] leading-none text-[#666]">×</span>]} />
                  </div>
                  <div className="mt-[12px] h-[26px] flex items-center">
                    <Check /><span className="ml-[16px]">Организация:</span>
                    <div className="ml-auto w-[86px] h-[26px] flex items-center justify-center rounded-[3px] border border-[#b4b4b4] bg-linear-to-b from-[#fbfbfb] to-[#e8e8e8]">Подбор</div>
                  </div>
                  <div className="mt-[11px] h-[420px] border border-[#a8a8a8] bg-white" />
                  <div className="mt-[8px] h-[24px] flex items-center"><Check on /><span className="ml-[16px]">Наличные денежные средства</span></div>
                  <div className="mt-[9px] h-[24px] flex items-center"><Check on /><span className="ml-[16px]">Наличные в кассах ККМ</span></div>
                  <div className="mt-[8px] h-[24px] flex items-center"><Check on /><span className="ml-[16px]">У подотчетников</span></div>
                </div>
              </div>
            </div>
          </div>
        </div>

        {/* bottom tabs */}
        <div className="h-[55px] shrink-0 flex bg-white border-t border-[#a6a6a6] text-[12px] leading-[16px] tracking-[0.37px] text-[#555]">
          {tabs.map((t) => (
            <div key={t.l[0] + t.l.length} className={`${t.w} shrink-0 relative border-r border-[#b0b0b0] ${t.pl} pt-[12px] whitespace-nowrap ${t.sel ? "bg-white border-b-[4px] border-b-[#009646] border-r-white" : "bg-[#f0f0f0]"}`}>
              {t.l.map((l) => <div key={l}>{l}</div>)}
              {t.x && <span className="absolute right-[12px] top-[8px] text-[10px] leading-[10px] text-[#9c9c9c]">x</span>}
            </div>
          ))}
        </div>
        <div className="h-[2px] shrink-0 bg-[#9a9a9a]" />
      </div>
    </div>
  );
}
